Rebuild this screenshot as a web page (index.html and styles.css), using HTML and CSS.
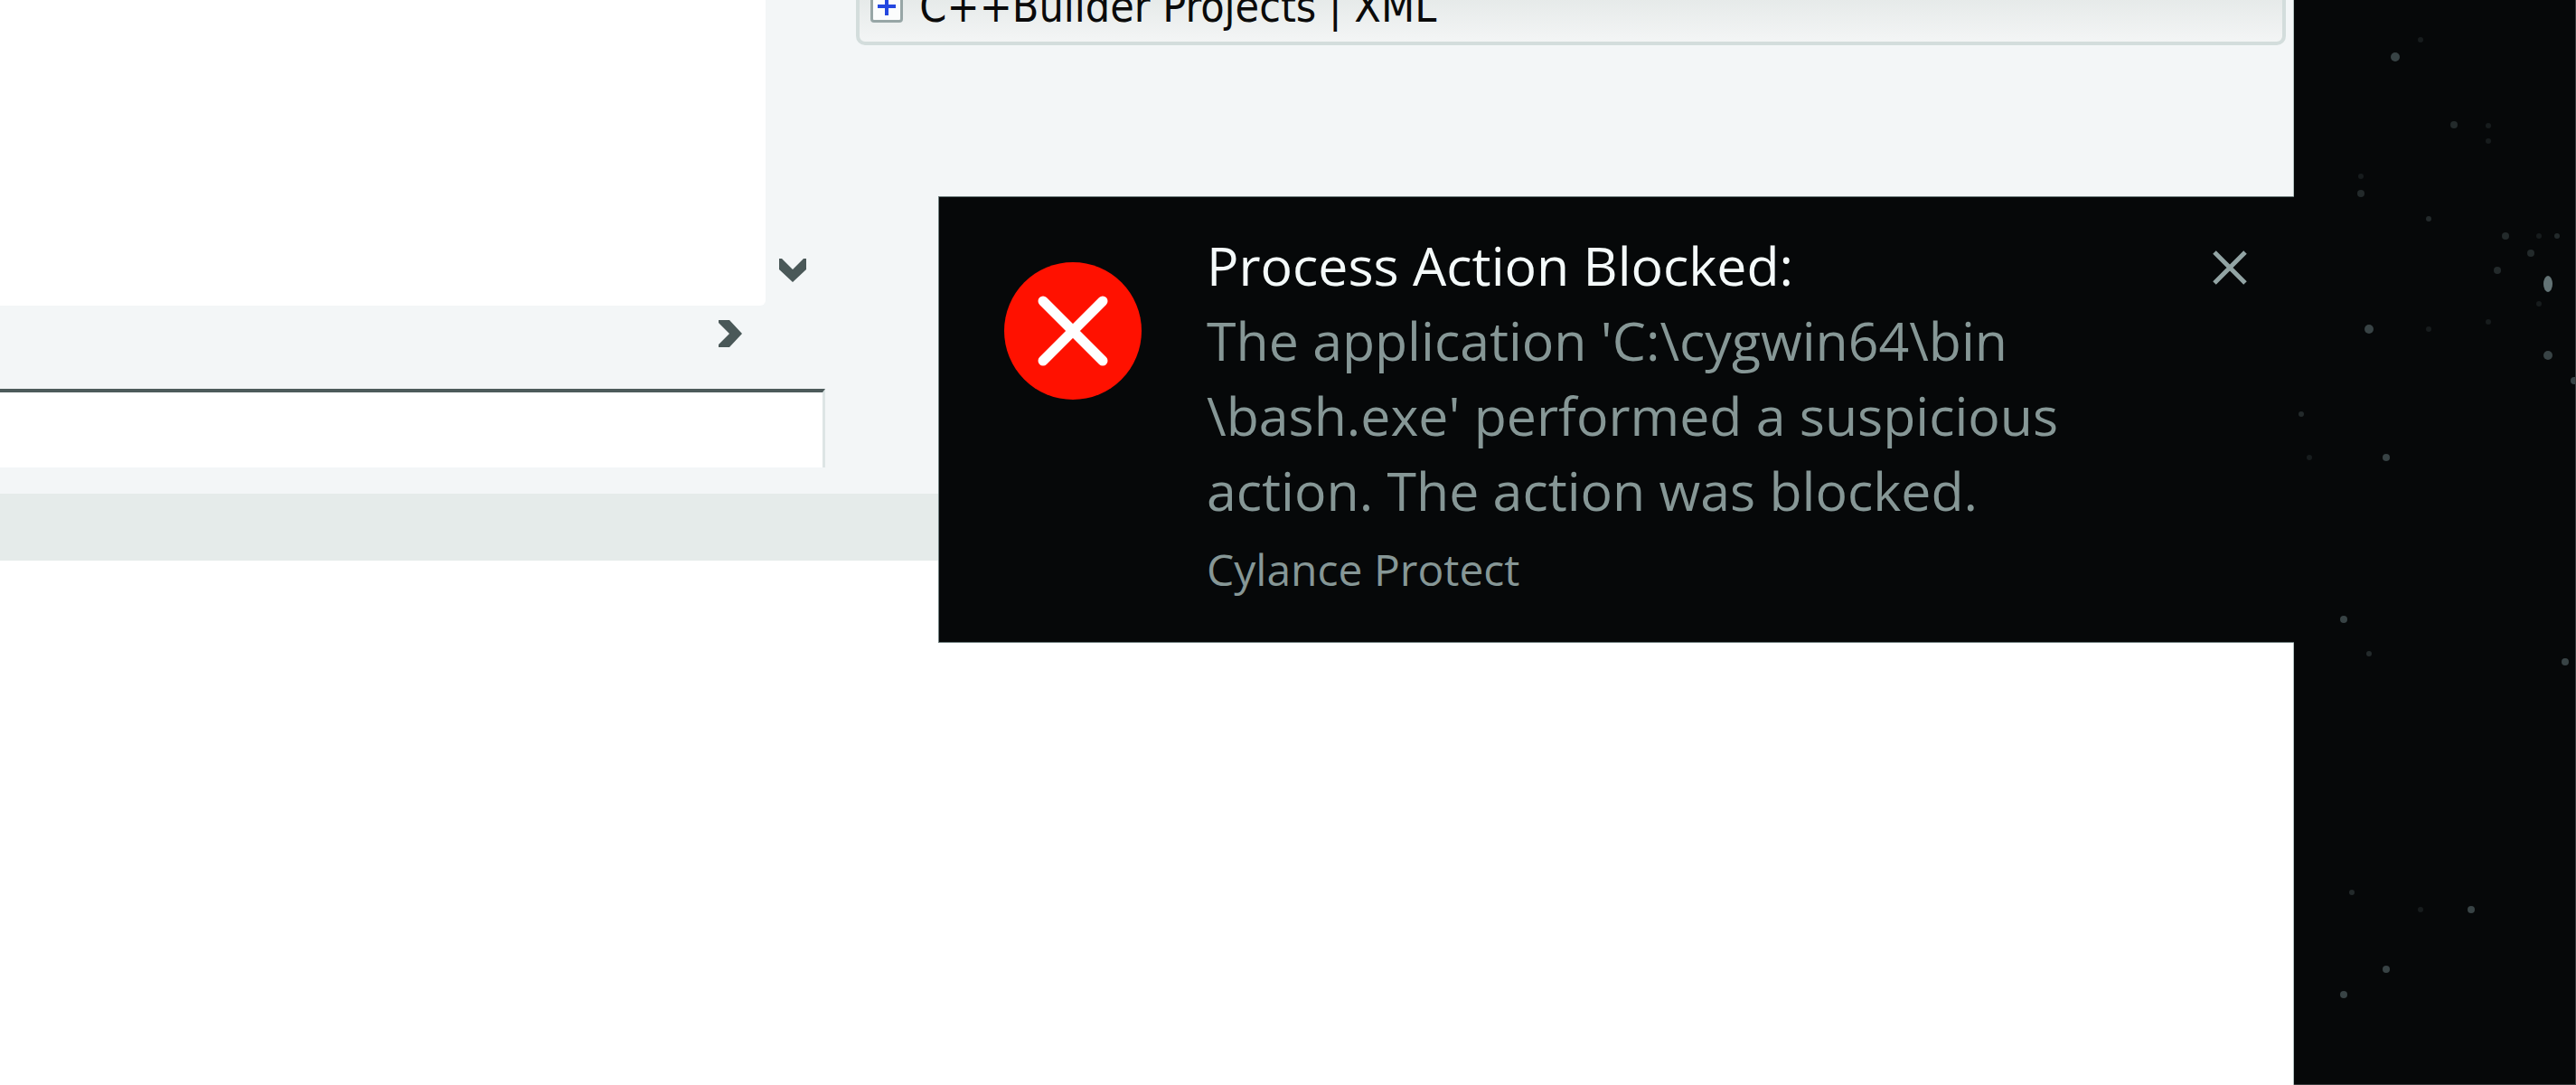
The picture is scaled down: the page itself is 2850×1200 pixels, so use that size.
FILE: index.html
```html
<!DOCTYPE html>
<html lang="en">
<head>
<meta charset="utf-8">
<title>Process Action Blocked</title>
<link rel="stylesheet" href="styles.css">
</head>
<body>
<main class="window">
  <div class="workspace">
    <section class="editor">
      <div class="editor-row">
        <div class="pane"></div>
        <button class="scroll-button scroll-down" aria-label="Scroll down">
          <svg width="30" height="26" viewBox="0 0 30 26"><path d="M0 0H3L15 12L27 0H30V12L15 26L0 12Z"/></svg>
        </button>
      </div>
      <div class="scroll-track">
        <button class="scroll-button" aria-label="Scroll right">
          <svg width="26" height="30" viewBox="0 0 26 30"><path d="M0 0H12L26 15L12 30H0V27L12 15L0 3Z"/></svg>
        </button>
      </div>
      <input class="field" type="text" aria-label="Value">
    </section>
    <section class="options">
      <div class="group">
        <button class="expander" aria-label="Expand">
          <svg width="20" height="20" viewBox="0 0 20 20"><path d="M0 10H20M10 0V20"/></svg>
        </button>
        <span class="group-title">C++Builder Projects | XML</span>
      </div>
    </section>
  </div>
  <div class="statusbar"></div>
  <div class="sheet"></div>

  <section class="toast" role="alert">
    <svg class="toast-icon" width="152" height="152" viewBox="0 0 152 152">
      <circle cx="76" cy="76" r="76" fill="#ff1100"/>
      <path d="M43 43L109 109M109 43L43 109" stroke="#fff" stroke-width="11" stroke-linecap="round"/>
    </svg>
    <div class="toast-text">
      <h1 class="toast-title">Process Action Blocked:</h1>
      <p class="toast-message">The application 'C:\cygwin64\bin<br>\bash.exe' performed a suspicious<br>action. The action was blocked.</p>
      <p class="toast-source">Cylance Protect</p>
    </div>
    <button class="toast-close" aria-label="Close">
      <svg width="40" height="40" viewBox="0 0 40 40"><path d="M3 3L37 37M37 3L3 37"/></svg>
    </button>
  </section>
</main>
<aside class="desktop">
  <svg class="stars" width="312" height="1190" viewBox="0 0 312 1190">
    <g fill="#171c1d">
      <circle cx="140" cy="44" r="3"/><circle cx="215" cy="139" r="3"/><circle cx="215" cy="156" r="3"/>
      <circle cx="74" cy="195" r="3"/><circle cx="271" cy="261" r="3"/><circle cx="271" cy="336" r="3"/>
      <circle cx="215" cy="356" r="3"/><circle cx="149" cy="364" r="3"/><circle cx="17" cy="506" r="3"/>
      <circle cx="140" cy="1006" r="3"/>
    </g>
    <g fill="#232a2b">
      <circle cx="177" cy="138" r="4"/><circle cx="74" cy="214" r="4"/><circle cx="149" cy="242" r="3"/>
      <circle cx="234" cy="261" r="4"/><circle cx="291" cy="261" r="3"/><circle cx="262" cy="280" r="4"/>
      <circle cx="225" cy="299" r="4"/><circle cx="8" cy="458" r="3"/><circle cx="83" cy="723" r="3"/>
      <circle cx="64" cy="987" r="3"/>
    </g>
    <g fill="#384345">
      <circle cx="112" cy="63" r="5"/><circle cx="83" cy="364" r="5"/><circle cx="281" cy="393" r="5"/>
      <circle cx="310" cy="421" r="4"/><circle cx="102" cy="506" r="4"/><circle cx="55" cy="685" r="4"/>
      <circle cx="300" cy="732" r="4"/><circle cx="196" cy="1006" r="4"/><circle cx="102" cy="1072" r="4"/>
      <circle cx="55" cy="1100" r="4"/>
    </g>
    <ellipse cx="281" cy="314" rx="5" ry="9" fill="#637375"/>
  </svg>
</aside>
</body>
</html>
```
FILE: styles.css
```css
* { box-sizing: border-box; }

body {
  margin: 0;
  min-height: 100vh;
  display: grid;
  grid-template-columns: 1fr 312px;
  overflow: hidden;
  background: #060809;
  font-family: "Open Sans", "Noto Sans", sans-serif;
}

button {
  padding: 0;
  border: 0;
  background: none;
}

svg { display: block; }

.window {
  position: relative;
  display: flex;
  flex-direction: column;
  background: #fff;
  border-right: 1px solid #b4c2c2;
}

.workspace {
  display: flex;
  gap: 34px;
  padding-bottom: 29px;
  background: #f3f6f7;
}

.editor {
  flex: 0 0 36%;
  display: flex;
  flex-direction: column;
}

.editor-row {
  display: flex;
  align-items: flex-end;
  height: 338px;
}

.pane {
  flex: 1;
  height: 100%;
  background: #fff;
  border-bottom-right-radius: 6px;
}

.scroll-button { fill: #4a5858; }

.scroll-down {
  display: flex;
  justify-content: center;
  width: 66px;
  padding: 0 6px 26px 0;
}

.scroll-track {
  display: flex;
  justify-content: flex-end;
  padding: 16px 92px 46px 0;
}

.field {
  width: 100%;
  height: 87px;
  padding: 0 16px;
  border: 0;
  border-top: 4px solid #4d5b5b;
  border-right: 3px solid #dde5e5;
  background: #fff;
  font: inherit;
}

.options {
  flex: 1;
  padding-right: 8px;
}

.group {
  display: flex;
  align-items: center;
  gap: 18px;
  height: 80px;
  margin-top: -30px;
  padding: 0 0 6px 12px;
  border: 4px solid #d3dddc;
  border-radius: 10px;
  background: linear-gradient(#dfe4e3, #f3f5f5);
}

.expander {
  display: flex;
  align-items: center;
  justify-content: center;
  width: 36px;
  height: 36px;
  border: 3px solid #97a6a6;
  border-radius: 4px;
  background: #fbfcfc;
  stroke: #2447e0;
  stroke-width: 4;
}

.group-title {
  font-family: "DejaVu Sans Condensed", "DejaVu Sans", sans-serif;
  font-size: 48px;
  line-height: 60px;
  color: #0a0a0a;
}

.statusbar {
  height: 74px;
  background: #e5ebea;
}

.sheet { flex: 1; }

.toast {
  position: absolute;
  top: 217px;
  right: -1px;
  width: 1500px;
  display: flex;
  align-items: flex-start;
  padding: 34px 51px 40px 72px;
  border: 1px solid #6f7f7f;
  border-right: 0;
  background: #060809;
}

.toast-icon {
  flex: none;
  margin: 38px 72px 0 0;
}

.toast-text { flex: 1; }

.toast-title,
.toast-message {
  margin: 0;
  font-size: 59px;
  font-weight: 400;
  line-height: 83px;
  white-space: nowrap;
}

.toast-title { color: #f4fafa; }

.toast-message { color: #869796; }

.toast-source {
  margin: 6px 0 0;
  font-size: 48px;
  line-height: 80px;
  color: #869796;
}

.toast-close {
  margin-top: 24px;
  stroke: #92a4a4;
  stroke-width: 5;
}

.desktop {
  overflow: hidden;
  border-right: 1px solid #3a3c3d;
  border-bottom: 1px solid #3a3c3d;
}
```
